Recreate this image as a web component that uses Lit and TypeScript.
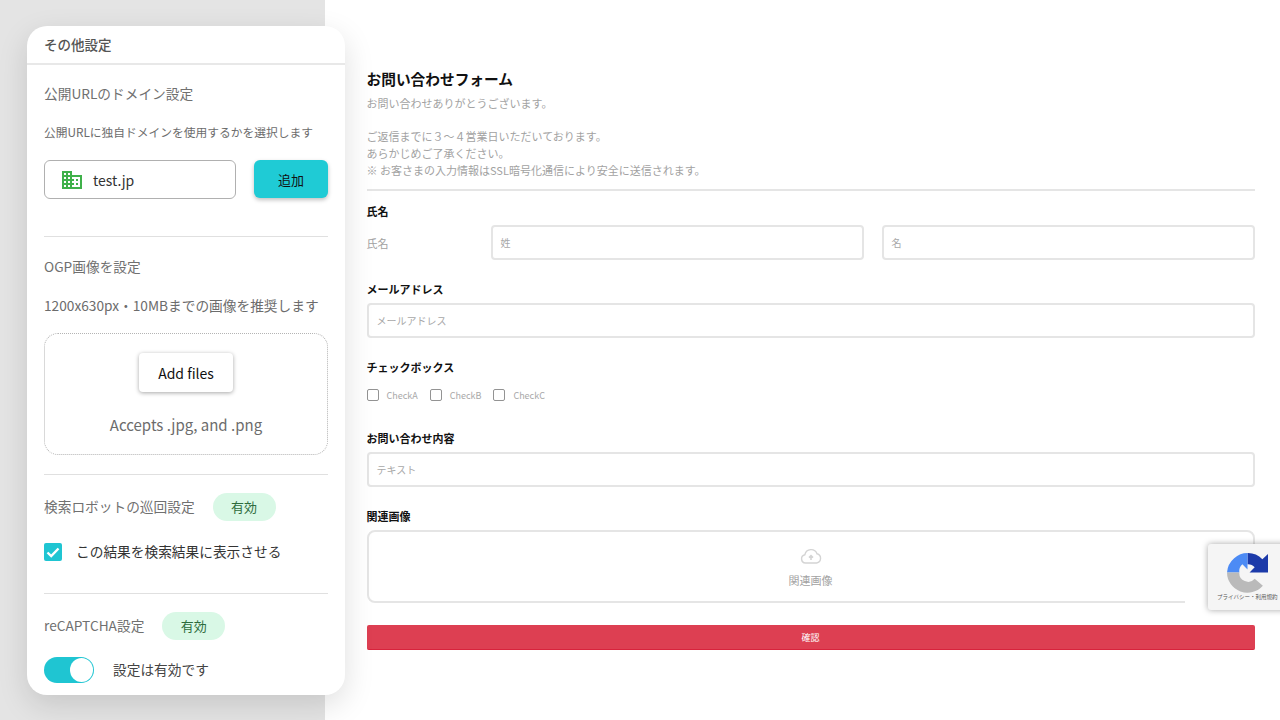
import { LitElement, html, css } from "lit";
import { customElement } from "lit/decorators.js";

@customElement("app-root")
export class AppRoot extends LitElement {
  static styles = css`
    :host { display: block; width: 1280px; height: 720px; position: relative; overflow: hidden; background: #fff;
      font-family: "Noto Sans CJK JP", "Noto Sans", sans-serif; }
    * { box-sizing: border-box; }
    .page { display: flex; width: 1280px; height: 720px; }
    .side { width: 325px; flex: none; background: #e4e4e4; }
    .main { flex: 1; padding: 69px 25.5px 0 41.5px; display: flex; flex-direction: column; }
    h1 { margin: 0; font-size: 14.7px; line-height: 20px; font-weight: 700; color: #111; }
    .intro { margin: 6px 0 0; font-size: 11px; line-height: 16.7px; color: #a2a2a2; padding-bottom: 10px; border-bottom: 2px solid #e5e5e5; }
    .lbl { font-size: 11px; line-height: 16px; font-weight: 700; color: #111; }
    .l1 { margin-top: 12.500px; }
    .name { display: flex; align-items: center; margin-top: 6px; }
    .name span { width: 124px; font-size: 11px; color: #a2a2a2; }
    .name .inp { flex: 1; }
    .name .inp + .inp { margin-left: 18px; }
    .inp { height: 35px; border: 2px solid #e5e5e5; border-radius: 4px; padding-left: 8px; display: flex; align-items: center; font-size: 10px; color: #a8a8a8; background: #fff; }
    .l2 { margin-top: 21px; margin-bottom: 6px; }
    .l3 { margin-top: 21px; }
    .checks { display: flex; align-items: center; margin-top: 13px; height: 14px; font-size: 9px; color: #a8a8a8; }
    .cb { width: 12px; height: 12px; border: 1.5px solid #939393; border-radius: 2px; margin-right: 8px; }
    .checks span { margin-right: 12px; }
    .l4 { margin-top: 28px; margin-bottom: 6px; }
    .l5 { margin-top: 21px; margin-bottom: 6px; }
    .upload { position: relative; height: 73px; border: 2px solid #e5e5e5; border-radius: 8px; display: flex; flex-direction: column; align-items: center; padding-top: 16px; font-size: 11px; color: #a2a2a2; line-height: 16px; }
    .upload::after { content: ""; position: absolute; right: -2px; bottom: -2px; width: 70px; height: 10px; background: #fff; }
    .upload svg { display: block; margin-bottom: 8px; }
    .submit { margin-top: 22px; height: 25px; background: #dd3f52; border-radius: 2px; color: #fff; font-size: 9px; display: flex; align-items: center; justify-content: center; border-bottom: 1px solid #d8233c; }
    .panel { position: absolute; left: 27px; top: 26px; width: 318px; height: 669px; background: #fff; border-radius: 20px; box-shadow: 0 10px 30px rgba(0,0,0,.13); overflow: hidden; color: #666; }
    .phead { height: 39px; border-bottom: 2px solid #e8e8e8; padding: 8px 0 0 17px; font-size: 13.5px; font-weight: 500; line-height: 20px; color: #555; }
    .body { padding: 0 17px 0 17px; }
    .t { font-size: 13.7px; line-height: 20px; color: #707070; }
    .t1 { margin-top: 18px; }
    .s { margin-top: 20px; font-size: 11.75px; line-height: 18px; color: #6c6c6c; }
    .dom { display: flex; justify-content: space-between; margin-top: 19px; }
    .domain { width: 192px; height: 39px; border: 1px solid #b0b0b0; border-radius: 6px; display: flex; align-items: center; padding-left: 15px; font-size: 14px; color: #333; gap: 9px; }
    .add { width: 74px; height: 38px; border-radius: 6px; background: #1fcbd5; color: #111; font-size: 13px; display: flex; align-items: center; justify-content: center; box-shadow: 0 2px 4px rgba(0,0,0,.25); }
    hr { border: none; height: 1px; background: #e0e0e0; margin: 0; }
    .h1 { margin-top: 37px; }
    .t2 { margin-top: 19px; }
    .s2 { margin-top: 19px; font-size: 13.7px; line-height: 20px; color: #6c6c6c; }
    .drop { margin-top: 18px; height: 122px; border: 1px dotted #b4b4b4; border-radius: 14px; display: flex; flex-direction: column; align-items: center; padding-top: 19px; }
    .af { width: 94px; height: 39px; border-radius: 4px; background: #fff; box-shadow: 0 1px 4px rgba(0,0,0,.35); color: #111; font-size: 14px; display: flex; align-items: center; justify-content: center; }
    .acc { margin-top: 22px; font-size: 15px; line-height: 22px; color: #6c6c6c; }
    .h2 { margin-top: 19px; }
    .row { display: flex; align-items: center; }
    .rob { margin-top: 18px; height: 28px; }
    .up { padding-bottom: 2px; }
    .pill { width: 63px; height: 28px; border-radius: 14px; background: #d9f8e6; color: #2e6b3c; font-size: 13px; line-height: 26px; padding-bottom: 1px; display: flex; align-items: center; justify-content: center; margin-left: 18px; }
    .chk { margin-top: 22px; height: 18px; gap: 14px; font-size: 13.7px; color: #333; }
    .box { width: 18px; height: 18px; background: #1fc5d2; border-radius: 2px; display: flex; align-items: center; justify-content: center; }
    .h3 { margin-top: 32px; }
    .rec { margin-top: 18px; height: 28px; }
    .tog { margin-top: 17px; gap: 19px; font-size: 13.7px; color: #444; height: 26px; }
    .sw { width: 50px; height: 26px; border-radius: 13px; background: #1fc5d2; position: relative; }
    .sw::after { content: ""; position: absolute; right: 1px; top: 1px; width: 23px; height: 24px; border-radius: 50%; background: #fff; }
    .cap { position: absolute; left: 1208px; top: 544px; width: 80px; height: 66px; background: #f5f5f5; border-radius: 3px; box-shadow: 0 0 6px rgba(0,0,0,.35); }
    .cap svg { position: absolute; left: 19px; top: 9px; }
    .cap span { position: absolute; left: 9px; top: 49px; font-size: 5.5px; line-height: 9px; color: #555; white-space: nowrap; }
  `;

  render() {
    return html`
      <div class="page">
        <div class="side"></div>
        <div class="main">
          <h1>お問い合わせフォーム</h1>
          <p class="intro">お問い合わせありがとうございます。<br><br>ご返信までに３～４営業日いただいております。<br>あらかじめご了承ください。<br>※ お客さまの入力情報はSSL暗号化通信により安全に送信されます。</p>
          <div class="lbl l1">氏名</div>
          <div class="name"><span>氏名</span><div class="inp">姓</div><div class="inp">名</div></div>
          <div class="lbl l2">メールアドレス</div>
          <div class="inp">メールアドレス</div>
          <div class="lbl l3">チェックボックス</div>
          <div class="checks"><i class="cb"></i><span>CheckA</span><i class="cb"></i><span>CheckB</span><i class="cb"></i><span>CheckC</span></div>
          <div class="lbl l4">お問い合わせ内容</div>
          <div class="inp">テキスト</div>
          <div class="lbl l5">関連画像</div>
          <div class="upload">
            <svg width="22" height="16" viewBox="0 0 22 16" fill="none" stroke="#d4d4d4" stroke-width="1.4"><path d="M5.5 15a4.2 4.2 0 0 1-.6-8.3A6.3 6.3 0 0 1 17 5.8 4.7 4.7 0 0 1 16.6 15Z"/><path d="M11 12V8M9 9.6 11 7.6l2 2" stroke-width="1.6"/></svg>
            関連画像
          </div>
          <div class="submit">確認</div>
        </div>
      </div>
      <div class="panel">
        <div class="phead">その他設定</div>
        <div class="body">
          <div class="t t1">公開URLのドメイン設定</div>
          <div class="s">公開URLに独自ドメインを使用するかを選択します</div>
          <div class="dom">
            <div class="domain">
              <svg width="24" height="24" viewBox="0 0 24 24" fill="#3fb14a"><path d="M12 7V3H2v18h20V7H12zM6 19H4v-2h2v2zm0-4H4v-2h2v2zm0-4H4V9h2v2zm0-4H4V5h2v2zm4 12H8v-2h2v2zm0-4H8v-2h2v2zm0-4H8V9h2v2zm0-4H8V5h2v2zm10 12h-8v-2h2v-2h-2v-2h2v-2h-2V9h8v10zm-2-8h-2v2h2v-2zm0 4h-2v2h2v-2z"/></svg>
              test.jp
            </div>
            <div class="add">追加</div>
          </div>
          <hr class="h1">
          <div class="t t2">OGP画像を設定</div>
          <div class="s2">1200x630px・10MBまでの画像を推奨します</div>
          <div class="drop">
            <div class="af">Add files</div>
            <div class="acc">Accepts .jpg, and .png</div>
          </div>
          <hr class="h2">
          <div class="row rob"><span class="t up">検索ロボットの巡回設定</span><span class="pill">有効</span></div>
          <div class="row chk"><span class="box"><svg width="14" height="11" viewBox="0 0 14 11" fill="none" stroke="#fff" stroke-width="2.4"><path d="M1.500 5.500l3.700 3.500L12.500 1.500"/></svg></span><span class="up">この結果を検索結果に表示させる</span></div>
          <hr class="h3">
          <div class="row rec"><span class="t up">reCAPTCHA設定</span><span class="pill">有効</span></div>
          <div class="row tog"><span class="sw"></span><span class="up">設定は有効です</span></div>
        </div>
      </div>
      <div class="cap">
        <svg width="41" height="41" viewBox="0 0 40 40">
          <path d="M20 0A20 20 0 0 1 34.500 6L40 1V19H22L27 14A8.500 8.500 0 0 0 20 11Z" fill="#1c3aa9"/>
          <path d="M7 5A20 20 0 0 1 20 0V16L15 11A9 9 0 0 0 12 19H0A20 20 0 0 1 7 5Z" fill="#4c8bf5"/>
          <path d="M0 19H12A8.500 8.500 0 0 0 27 25L35 32A20 20 0 0 1 0 19Z" fill="#bababa"/>
        </svg>
        <span>プライバシー・利用規約</span>
      </div>
    `;
  }
}
